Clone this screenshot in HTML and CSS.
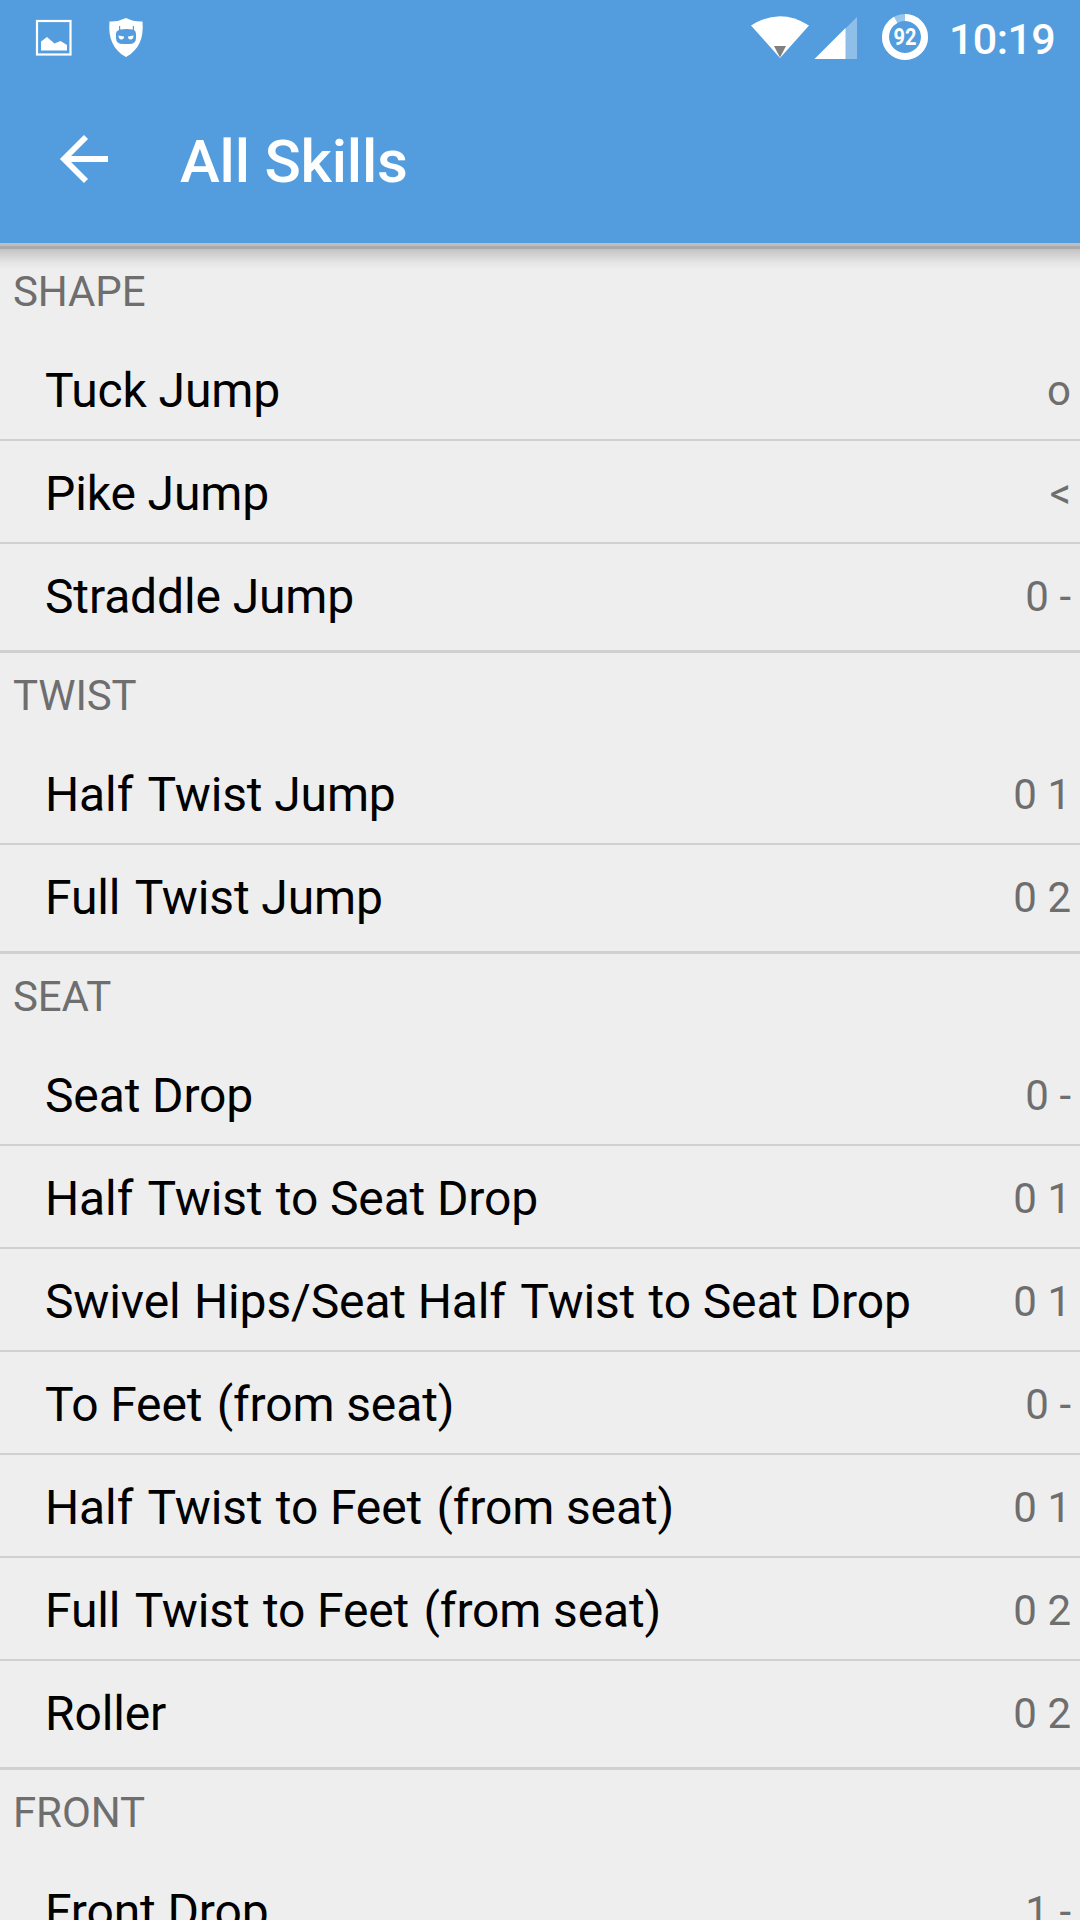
FILE: index.html
```html
<!DOCTYPE html>
<html lang="en">
<head>
<meta charset="utf-8">
<title>All Skills</title>
<link rel="stylesheet" href="styles.css">
</head>
<body>
<div class="screen">
  <header class="top">
    <div class="status">
      <svg class="status-left" width="150" height="72" viewBox="0 0 150 72">
        <rect x="37" y="21" width="33.5" height="33.5" fill="none" stroke="#fff" stroke-width="2.2"/>
        <path d="M41 41.5L47 37L54.5 43.5L60.5 41L67 45V50.500H41Z" fill="#fff"/>
        <path d="M126 18Q134 22 142.500 21.500C144 38 139 50 126 57C113 50 108 38 109.500 21.500Q118 22 126 18Z" fill="#fff"/>
        <path d="M119 26h1.200v3.500q6-1 12.600 0V26h1.200v4q2 1 2 4v4q0 6-7 6h-6q-7 0-7-6v-4q0-3 3-4Z" fill="#539dde"/>
        <path d="M118.500 35.500l5.500 1q0 3-2.500 3q-3 0-3-4ZM133.500 35.500l-5.500 1q0 3 2.500 3q3 0 3-4Z" fill="#fff"/>
      </svg>
      <svg class="status-right" width="200" height="72" viewBox="740 0 200 72">
        <path d="M751 25.500Q780 7 809 25.500L780 58Z" fill="#fff"/>
        <path d="M774 46h12L780 57.500Z" fill="#808080"/>
        <path d="M857 17V59H815Z" fill="#fff" opacity=".35"/>
        <path d="M845.500 28V59H814.500Z" fill="#fff"/>
        <circle cx="905" cy="37" r="19.500" fill="none" stroke="#fff" stroke-opacity=".42" stroke-width="7"/>
        <circle cx="905" cy="37" r="19.500" fill="none" stroke="#fff" stroke-width="7" pathLength="100" stroke-dasharray="92 8" transform="rotate(-90 905 37)"/>
        <text class="battery" x="893.500" y="45.300" textLength="23" lengthAdjust="spacingAndGlyphs">92</text>
      </svg>
      <span class="clock">10:19</span>
    </div>
    <div class="bar">
      <svg class="back" width="50" height="50" viewBox="0 0 50 50"><path d="M49 25H5M27 3L5 25L27 47" fill="none" stroke="#fff" stroke-width="5.800"/></svg>
      <h1>All Skills</h1>
    </div>
  </header>
  <main>
    <section>
      <h2>SHAPE</h2>
      <ul>
        <li><span>Tuck Jump</span><b>o</b></li>
        <li><span>Pike Jump</span><b>&lt;</b></li>
        <li><span>Straddle Jump</span><b>0 -</b></li>
      </ul>
    </section>
    <section>
      <h2>TWIST</h2>
      <ul>
        <li><span>Half <i class="wide">Twist</i> Jump</span><b>0 1</b></li>
        <li><span>Full <i class="wide">Twist</i> Jump</span><b>0 2</b></li>
      </ul>
    </section>
    <section>
      <h2>SEAT</h2>
      <ul>
        <li><span>Seat Drop</span><b>0 -</b></li>
        <li><span>Half <i class="wide">Twist</i> <i>to</i> Seat Drop</span><b>0 1</b></li>
        <li><span>Swivel <i>Hips/Seat</i> Half <i class="wide">Twist</i> <i>to</i> Seat Drop</span><b>0 1</b></li>
        <li><span>To Feet <i class="wide">(from</i> seat)</span><b>0 -</b></li>
        <li><span>Half <i class="wide">Twist</i> <i>to</i> Feet <i class="wide">(from</i> seat)</span><b>0 1</b></li>
        <li><span>Full <i class="wide">Twist</i> <i>to</i> Feet <i class="wide">(from</i> seat)</span><b>0 2</b></li>
        <li><span>Roller</span><b>0 2</b></li>
      </ul>
    </section>
    <section>
      <h2>FRONT</h2>
      <ul>
        <li><span>Front Drop</span><b>1 -</b></li>
      </ul>
    </section>
  </main>
</div>
</body>
</html>
```
FILE: styles.css
```css
* { box-sizing: border-box; margin: 0; padding: 0; }
body { background: #eee; font-family: Roboto, "Liberation Sans", sans-serif; overflow: hidden; }
.screen { width: 1080px; height: 1920px; overflow: hidden; display: flex; flex-direction: column; }
.top { flex: none; height: 243px; background: #539dde; color: #fff; }
.status { height: 72px; display: flex; }
.status-right { margin-left: 590px; }
.battery { font-family: Roboto, sans-serif; font-weight: 700; font-size: 23.5px; fill: #fff; }
.clock { font-size: 43px; font-weight: 500; line-height: 50px; letter-spacing: -.6px; padding: 14px 0 0 9px; white-space: nowrap; }
.bar { height: 171px; display: flex; }
.back { flex: none; margin: 62px 0 0 59px; }
.bar h1 { font-size: 60px; font-weight: 500; line-height: 70px; letter-spacing: -.2px; padding: 55px 0 0 71px; white-space: nowrap; }
main { flex: none; padding-top: 3px; background: linear-gradient(#c0c0c0, #bcbcbc 3px, #c3c3c3 6px, #d4d4d4 13px, #e6e6e6 20px, #eee 27px); }
section { border-top: 3px solid #d0d0d0; }
section:first-child { border-top-color: #aaa; }
h2 { height: 89px; padding: 18px 0 0 13px; font-size: 42px; font-weight: 400; line-height: 49px; letter-spacing: -.1px; color: #6e6e6e; }
ul { list-style: none; }
li { height: 103px; display: flex; justify-content: space-between; padding: 25px 9px 0 45px; border-bottom: 2px solid #d0d0d0; color: #000; white-space: nowrap; }
li:last-child { height: 106px; border-bottom: 0; }
li span { font-size: 48px; line-height: 56px; letter-spacing: -.13px; }
li i { font-style: normal; margin-left: 1.6px; }
li i.wide { margin-left: 2.6px; }
li b { font-size: 42px; font-weight: 400; line-height: 56px; color: #6e6e6e; }
```
